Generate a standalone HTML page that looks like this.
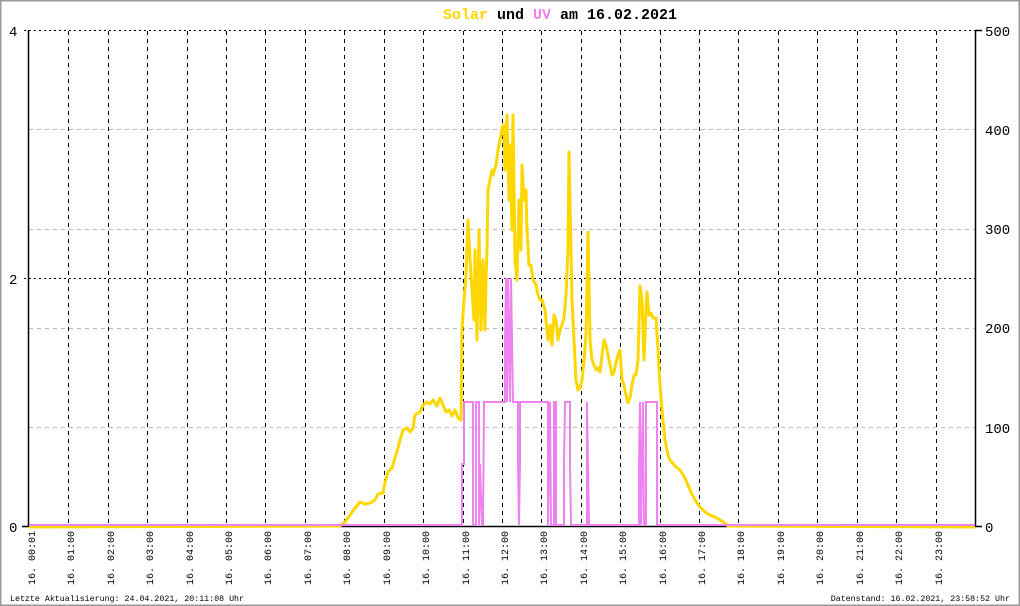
<!DOCTYPE html>
<html><head><meta charset="utf-8"><style>
html,body{margin:0;padding:0;background:#fff}
svg{display:block}
text{font-family:"Liberation Mono",monospace}
</style></head><body>
<svg width="1020" height="606" viewBox="0 0 1020 606" xmlns="http://www.w3.org/2000/svg">
<rect x="0.5" y="0.5" width="1019" height="605" fill="#fff" stroke="#999" stroke-width="2"/>
<text x="560" y="19" font-size="15" font-weight="bold" text-anchor="middle"><tspan fill="#ffd700">Solar</tspan><tspan fill="#000"> und </tspan><tspan fill="#ee82ee">UV</tspan><tspan fill="#000"> am 16.02.2021</tspan></text>
<g stroke="#bbb" stroke-width="1" stroke-dasharray="4,4">
<line x1="29" y1="129.5" x2="975" y2="129.5"/>
<line x1="29" y1="229.5" x2="975" y2="229.5"/>
<line x1="29" y1="328.5" x2="975" y2="328.5"/>
<line x1="29" y1="427.5" x2="975" y2="427.5"/>
</g>
<g stroke="#000" stroke-width="1" stroke-dasharray="2,3">
<line x1="24" y1="30.5" x2="975" y2="30.5"/>
<line x1="24" y1="278.5" x2="975" y2="278.5"/>
</g>
<g stroke="#000" stroke-width="1" stroke-dasharray="4,4">
<line x1="68.5" y1="31" x2="68.5" y2="526"/><line x1="108.5" y1="31" x2="108.5" y2="526"/><line x1="147.5" y1="31" x2="147.5" y2="526"/><line x1="187.5" y1="31" x2="187.5" y2="526"/><line x1="226.5" y1="31" x2="226.5" y2="526"/><line x1="265.5" y1="31" x2="265.5" y2="526"/><line x1="305.5" y1="31" x2="305.5" y2="526"/><line x1="344.5" y1="31" x2="344.5" y2="526"/><line x1="384.5" y1="31" x2="384.5" y2="526"/><line x1="423.5" y1="31" x2="423.5" y2="526"/><line x1="463.5" y1="31" x2="463.5" y2="526"/><line x1="502.5" y1="31" x2="502.5" y2="526"/><line x1="541.5" y1="31" x2="541.5" y2="526"/><line x1="581.5" y1="31" x2="581.5" y2="526"/><line x1="620.5" y1="31" x2="620.5" y2="526"/><line x1="660.5" y1="31" x2="660.5" y2="526"/><line x1="699.5" y1="31" x2="699.5" y2="526"/><line x1="738.5" y1="31" x2="738.5" y2="526"/><line x1="778.5" y1="31" x2="778.5" y2="526"/><line x1="817.5" y1="31" x2="817.5" y2="526"/><line x1="857.5" y1="31" x2="857.5" y2="526"/><line x1="896.5" y1="31" x2="896.5" y2="526"/><line x1="936.5" y1="31" x2="936.5" y2="526"/>
</g>
<g stroke="#000" stroke-width="1.5" fill="none">
<line x1="28.5" y1="30" x2="28.5" y2="527"/>
<line x1="975.5" y1="30" x2="975.5" y2="527"/>
<line x1="22" y1="526.5" x2="982" y2="526.5"/>
<line x1="975" y1="30.5" x2="982" y2="30.5"/>
</g>
<g font-size="14" fill="#000">
<text x="9" y="36">4</text><text x="9" y="284">2</text><text x="9" y="532">0</text>
<text x="985" y="36">500</text><text x="985" y="135">400</text><text x="985" y="234">300</text><text x="985" y="333">200</text><text x="985" y="433">100</text><text x="985" y="532">0</text>
</g>
<polyline fill="none" stroke="#ffd700" stroke-width="3" stroke-linejoin="round" points="29,527 340,526 345,522 350,515 355,508 360,502 365,504 370,503 375,500 378,494 383,493 385,483 388,472 392,468 395,458 398,448 400,440 403,430 407,428 410,432 413,428 415,415 420,412 423,405 427,402 430,404 433,400 437,406 440,398 443,405 446,412 449,410 452,416 455,410 458,418 461,420 462,330 464,300 466,275 468,220 470,260 472,290 474,320 475,250 477,340 479,230 481,330 483,260 485,330 486,280 487,250 488,190 490,180 492,170 493,175 496,165 498,150 500,140 502,128 504,125 505,170 507,115 509,200 510,145 512,230 513,115 515,260 517,280 519,200 521,250 522,165 524,200 526,190 527,230 529,265 531,265 533,280 536,285 538,295 540,300 542,300 545,310 548,340 550,325 552,345 554,315 556,320 558,340 560,330 562,325 564,318 566,295 568,250 569,152 570,200 572,300 574,340 576,380 578,390 580,388 582,380 584,360 586,335 588,232 590,340 592,360 594,365 596,370 598,368 600,372 602,355 604,340 606,345 608,355 610,365 612,375 614,372 616,362 618,355 620,350 622,380 624,385 626,395 628,403 630,398 632,385 634,375 636,375 638,360 640,286 642,300 644,360 646,310 647,292 649,315 651,313 653,318 656,318 658,350 660,385 662,410 665,440 668,455 670,460 675,466 680,470 685,478 690,490 695,500 700,507 705,512 710,515 715,517 720,520 725,523 728,526 975,527"/>
<polyline fill="none" stroke="#ee82ee" stroke-width="2" points="29,525 462,525 462,464 464,464 464,402 473,402 473,525 476,525 476,402 479,402 479,525 480,464 482,525 483,525 484,402 505,402 505,340 506,278 507,402 508,278 509,340 510,402 511,278 513,402 518,402 518,464 519,525 520,464 520,402 548,402 548,525 549,464 550,402 551,525 554,525 554,402 556,402 556,525 564,525 564,464 565,402 570,402 570,464 571,525 587,525 587,402 588,464 589,525 639,525 639,464 640,402 641,525 642,464 643,402 644,525 646,525 646,402 657,402 657,525 975,525"/>
<g font-size="10" fill="#000">
<text transform="translate(35,585) rotate(-90)">16. 00:01</text>
<text transform="translate(74,585) rotate(-90)">16. 01:00</text>
<text transform="translate(114,585) rotate(-90)">16. 02:00</text>
<text transform="translate(153,585) rotate(-90)">16. 03:00</text>
<text transform="translate(193,585) rotate(-90)">16. 04:00</text>
<text transform="translate(232,585) rotate(-90)">16. 05:00</text>
<text transform="translate(271,585) rotate(-90)">16. 06:00</text>
<text transform="translate(311,585) rotate(-90)">16. 07:00</text>
<text transform="translate(350,585) rotate(-90)">16. 08:00</text>
<text transform="translate(390,585) rotate(-90)">16. 09:00</text>
<text transform="translate(429,585) rotate(-90)">16. 10:00</text>
<text transform="translate(469,585) rotate(-90)">16. 11:00</text>
<text transform="translate(508,585) rotate(-90)">16. 12:00</text>
<text transform="translate(547,585) rotate(-90)">16. 13:00</text>
<text transform="translate(587,585) rotate(-90)">16. 14:00</text>
<text transform="translate(626,585) rotate(-90)">16. 15:00</text>
<text transform="translate(666,585) rotate(-90)">16. 16:00</text>
<text transform="translate(705,585) rotate(-90)">16. 17:00</text>
<text transform="translate(744,585) rotate(-90)">16. 18:00</text>
<text transform="translate(784,585) rotate(-90)">16. 19:00</text>
<text transform="translate(823,585) rotate(-90)">16. 20:00</text>
<text transform="translate(863,585) rotate(-90)">16. 21:00</text>
<text transform="translate(902,585) rotate(-90)">16. 22:00</text>
<text transform="translate(942,585) rotate(-90)">16. 23:00</text>
</g>
<g font-size="8.3" fill="#000">
<text x="10" y="601">Letzte Aktualisierung: 24.04.2021, 20:11:08 Uhr</text>
<text x="1010" y="601" text-anchor="end">Datenstand: 16.02.2021, 23:58:52 Uhr</text>
</g>
</svg>
</body></html>
